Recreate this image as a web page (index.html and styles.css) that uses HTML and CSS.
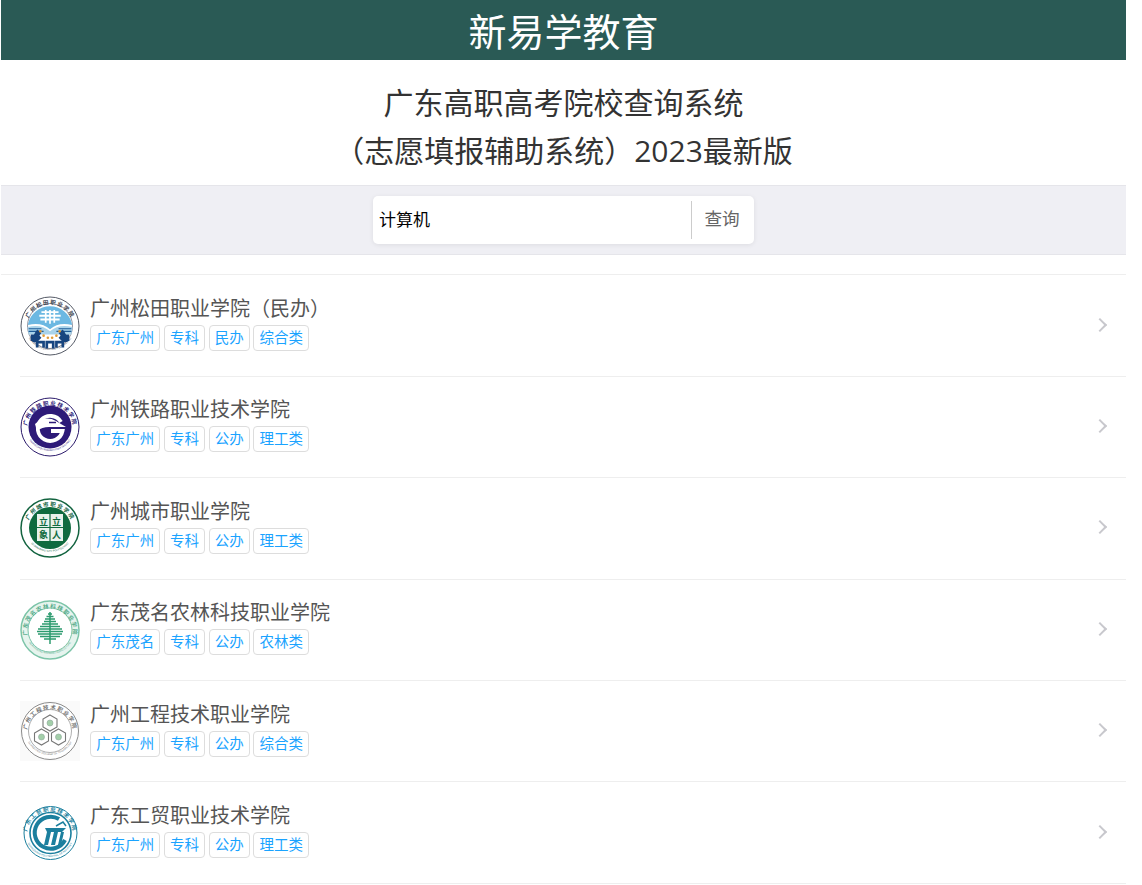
FILE: index.html
```html
<!DOCTYPE html>
<html lang="zh-CN">
<head>
<meta charset="utf-8">
<title>新易学教育</title>
<link rel="stylesheet" href="styles.css">
</head>
<body>
<div class="page">
  <header class="brand">新易学教育</header>
  <section class="heading">
    <div>广东高职高考院校查询系统</div>
    <div>（志愿填报辅助系统）2023最新版</div>
  </section>
  <section class="search-band">
    <form class="search">
      <input class="search-input" type="text" value="计算机">
      <span class="search-btn">查询</span>
    </form>
  </section>
  <svg class="defs" width="0" height="0">
    <defs>
      <path id="arcTop" d="M8 38 A23 23 0 1 1 52 38"/>
      <path id="arcBot" d="M6 36 A25 25 0 0 0 54 36"/>
    </defs>
  </svg>
  <main class="list">

    <a class="row">
      <svg class="logo" viewBox="0 0 60 60">
        <circle cx="30" cy="30" r="29" fill="#fff" stroke="#555a66" stroke-width="1"/>
        <circle cx="30" cy="30" r="22.500" fill="#fff" stroke="#667" stroke-width=".7"/>
        <text class="ring-cn cn-dark"><textPath href="#arcTop" startOffset="50%">广州松田职业学院</textPath></text>
        <text class="ring-en en-dark"><textPath href="#arcBot" startOffset="50%">GUANGZHOU SONGTIAN POLYTECHNIC</textPath></text>
        <g transform="translate(30 30) scale(1.07) translate(-30 -30)">
          <path d="M9.500 28 A21 21 0 0 1 50.500 28 L50.500 29 Q38 26 30 33 Q22 26 9.500 29 Z" fill="#6cb8e2"/>
          <path d="M22 17h16M20 20.500h20M21 24h18" stroke="#fff" stroke-width="1.800"/>
          <path d="M26 15v12M30 15v13M34 15v12" stroke="#fff" stroke-width="1.600"/>
          <path d="M9 31 Q22 28 30 35 Q38 28 51 31 L50 38 H10 Z" fill="#a9d3ea"/>
          <path d="M10 32.500h12M38 32.500h12M10 35h14M36 35h14" stroke="#1f5d99" stroke-width="1"/>
          <path d="M16 45 A16 16 0 0 1 20 35" fill="none" stroke="#17457f" stroke-width="5"/>
          <path d="M44 45 A16 16 0 0 0 40 35" fill="none" stroke="#17457f" stroke-width="5"/>
          <path d="M12 38h7l3 3-3 3h-7zM48 38h-7l-3 3 3 3h7z" fill="#17457f"/>
          <path d="M18 50v-5h6v5M27 51v-6h6v6M36 50v-5h6v5" fill="none" stroke="#17457f" stroke-width="2.500"/>
          <g fill="#e09a35"><circle cx="21" cy="35" r="1.200"/><circle cx="24" cy="39" r="1.200"/><circle cx="28" cy="41" r="1.200"/><circle cx="32" cy="41" r="1.200"/><circle cx="36" cy="39" r="1.200"/><circle cx="39" cy="35" r="1.200"/></g>
        </g>
      </svg>
      <div class="info">
        <div class="name">广州松田职业学院（民办）</div>
        <div class="tags"><span class="tag">广东广州</span><span class="tag">专科</span><span class="tag">民办</span><span class="tag">综合类</span></div>
      </div>
      <span class="chev"></span>
    </a>

    <a class="row">
      <svg class="logo" viewBox="0 0 60 60">
        <circle cx="30" cy="30" r="29" fill="#fff" stroke="#2b1a6b" stroke-width="1"/>
        <text class="ring-cn cn-navy"><textPath href="#arcTop" startOffset="50%">广州铁路职业技术学院</textPath></text>
        <text class="ring-en en-navy"><textPath href="#arcBot" startOffset="50%">GUANGZHOU RAILWAY POLYTECHNIC</textPath></text>
        <circle cx="30" cy="30" r="21.500" fill="#2d1a78"/>
        <path d="M41 25 A12.500 12.500 0 1 0 42.500 34 H31" fill="none" stroke="#fff" stroke-width="3.800"/>
        <path d="M15 27 Q25 18 36 24 L46 30 H29 Q22 30 17 34 Z" fill="#fff"/>
        <path d="M29 25.500h7" stroke="#2d1a78" stroke-width="1.500"/>
      </svg>
      <div class="info">
        <div class="name">广州铁路职业技术学院</div>
        <div class="tags"><span class="tag">广东广州</span><span class="tag">专科</span><span class="tag">公办</span><span class="tag">理工类</span></div>
      </div>
      <span class="chev"></span>
    </a>

    <a class="row">
      <svg class="logo" viewBox="0 0 60 60">
        <circle cx="30" cy="30" r="29" fill="#fff" stroke="#12633f" stroke-width="1.500"/>
        <text class="ring-cn cn-green"><textPath href="#arcTop" startOffset="50%">广州城市职业学院</textPath></text>
        <text class="ring-en en-green"><textPath href="#arcBot" startOffset="50%">GUANGZHOU CITY POLYTECHNIC</textPath></text>
        <circle cx="30" cy="30" r="21" fill="#0f6a3f"/>
        <rect x="17" y="16" width="26" height="27" fill="#e9f2ec"/>
        <path d="M30 16v27M17 29.500h26" stroke="#0f6a3f" stroke-width="1.200"/>
        <text class="seal" x="23.500" y="26.500">立</text>
        <text class="seal" x="36.500" y="26.500">立</text>
        <text class="seal" x="23.500" y="40">象</text>
        <text class="seal" x="36.500" y="40">人</text>
      </svg>
      <div class="info">
        <div class="name">广州城市职业学院</div>
        <div class="tags"><span class="tag">广东广州</span><span class="tag">专科</span><span class="tag">公办</span><span class="tag">理工类</span></div>
      </div>
      <span class="chev"></span>
    </a>

    <a class="row">
      <svg class="logo" viewBox="0 0 60 60">
        <circle cx="30" cy="30" r="29" fill="#e6f4ee" stroke="#7cc4a8" stroke-width="1.500"/>
        <circle cx="30" cy="30" r="22" fill="#fff" stroke="#7cc4a8" stroke-width="1"/>
        <text class="ring-cn cn-mint"><textPath href="#arcTop" startOffset="50%">广东茂名农林科技职业学院</textPath></text>
        <text class="ring-en en-mint"><textPath href="#arcBot" startOffset="50%">GUANGDONG MAOMING AGRICULTURE</textPath></text>
        <path d="M30 12V44" stroke="#2d9b6f" stroke-width="1.500"/>
        <path d="M28 14h4M26.500 16.500h7M25 19h10M24 21.500h12M22 24h16M20 26.500h20M18 29h24M17 31.500h26M18 34h24M20 36.500h20M24 39h12" stroke="#2d9b6f" stroke-width="1.700"/>
      </svg>
      <div class="info">
        <div class="name">广东茂名农林科技职业学院</div>
        <div class="tags"><span class="tag">广东茂名</span><span class="tag">专科</span><span class="tag">公办</span><span class="tag">农林类</span></div>
      </div>
      <span class="chev"></span>
    </a>

    <a class="row">
      <svg class="logo logo-soft" viewBox="0 0 60 60">
        <circle cx="30" cy="30" r="28.500" fill="#fff" stroke="#8a8a8a" stroke-width="1"/>
        <circle cx="30" cy="30" r="21.500" fill="#fff" stroke="#999" stroke-width=".8"/>
        <text class="ring-cn cn-gray"><textPath href="#arcTop" startOffset="50%">广州工程技术职业学院</textPath></text>
        <text class="ring-en en-gray"><textPath href="#arcBot" startOffset="50%">GUANGZHOU COLLEGE OF TECHNOLOGY</textPath></text>
        <g fill="#fff" stroke="#777" stroke-width="1.100">
          <path d="M30 14 L37 18 V26 L30 30 L23 26 V18 Z"/>
          <path d="M21.500 28 L28.500 32 V40 L21.500 44 L14.500 40 V32 Z"/>
          <path d="M38.500 28 L45.500 32 V40 L38.500 44 L31.500 40 V32 Z"/>
        </g>
        <g fill="#a3cfa9" stroke="#8fa89a" stroke-width=".6">
          <circle cx="30" cy="22" r="3"/><circle cx="21.500" cy="36" r="3"/><circle cx="38.500" cy="36" r="3"/>
        </g>
      </svg>
      <div class="info">
        <div class="name">广州工程技术职业学院</div>
        <div class="tags"><span class="tag">广东广州</span><span class="tag">专科</span><span class="tag">公办</span><span class="tag">综合类</span></div>
      </div>
      <span class="chev"></span>
    </a>

    <a class="row">
      <svg class="logo" viewBox="0 0 60 60">
        <circle cx="30.500" cy="30" r="26.500" fill="#fff" stroke="#1b7f9e" stroke-width="1"/>
        <circle cx="30.500" cy="30" r="20.500" fill="#fff" stroke="#1b7f9e" stroke-width="1.600"/>
        <text class="ring-cn cn-teal"><textPath href="#arcTop" startOffset="50%">广东工贸职业技术学院</textPath></text>
        <text class="ring-en en-teal"><textPath href="#arcBot" startOffset="50%">GUANGDONG POLYTECHNIC OF INDUSTRY</textPath></text>
        <path d="M39 16 A16 16 0 1 0 45 37" fill="none" stroke="#1b7f9e" stroke-width="4"/>
        <path d="M25 25 H46 L42 29 H38 L35 42 H31 L34 29 H31 L28 42 H24 L27 29 Z" fill="#1b7f9e"/>
        <path d="M38 42 L41 29 H44 L41 42 Z" fill="#1b7f9e"/>
        <path d="M36 23l7-4 3 4" fill="none" stroke="#1b7f9e" stroke-width="1.500"/>
      </svg>
      <div class="info">
        <div class="name">广东工贸职业技术学院</div>
        <div class="tags"><span class="tag">广东广州</span><span class="tag">专科</span><span class="tag">公办</span><span class="tag">理工类</span></div>
      </div>
      <span class="chev"></span>
    </a>

  </main>
</div>
</body>
</html>
```
FILE: styles.css
```css
* { box-sizing: border-box; }
html, body { margin: 0; padding: 0; background: #fff; overflow: hidden; }
body { font-family: "Noto Sans CJK SC", "Noto Sans", sans-serif; height: 885px; }
.page { width: 1125px; margin-left: 1px; }
.defs { position: absolute; }

.brand {
  height: 60px;
  background: #2a5a55;
  color: #fff;
  font-size: 38px;
  line-height: 60px;
  text-align: center;
}
.heading {
  height: 125px;
  padding-top: 19px;
  font-family: "Open Sans", "Noto Sans CJK SC", sans-serif;
  font-size: 30px;
  line-height: 48px;
  color: #333;
  text-align: center;
}
.search-band {
  height: 70px;
  background: #efeff4;
  border-top: 1px solid #e5e5ea;
  border-bottom: 1px solid #e5e5ea;
  display: flex;
  justify-content: center;
  padding-top: 10px;
}
.search {
  width: 381px;
  height: 48px;
  background: #fff;
  border-radius: 5px;
  box-shadow: 0 1px 5px rgba(0, 0, 0, .08);
  display: flex;
  align-items: center;
}
.search-input {
  flex: 1;
  min-width: 0;
  height: 44px;
  margin-bottom: 4px;
  border: 0;
  outline: 0;
  background: transparent;
  padding: 0 6px;
  font: 17px/24px "Noto Sans CJK SC", sans-serif;
  color: #000;
}
.search-btn {
  width: 63px;
  height: 38px;
  border-left: 1px solid #ccc;
  color: #666;
  font-size: 17.6px;
  line-height: 34px;
  padding-right: 2px;
  text-align: center;
}

.list { margin-top: 19px; padding-top: .4px; border-top: 1px solid #eee; }
.row {
  display: flex;
  align-items: center;
  height: 101.4px;
  margin-left: 19px;
  border-bottom: 1px solid #eee;
  padding-right: 19px;
}
.logo { width: 60px; height: 60px; flex: none; margin-right: 10px; }
.logo-soft { background: #fafafa; }
.info { flex: 1; min-width: 0; }
.name { font-size: 20px; line-height: 28px; color: #555; margin-top: -6px; }
.tags { display: flex; gap: 3.4px; margin-top: 3px; }
.tag {
  height: 26px;
  padding: 0 5.2px;
  border: 1px solid #ddd;
  border-radius: 4px;
  font-size: 14.5px;
  line-height: 22px;
  color: #1aa3ff;
}
.chev {
  width: 10px;
  height: 10px;
  flex: none;
  margin-right: 2px;
  margin-bottom: 2px;
  border-top: 2px solid #c8c8cd;
  border-right: 2px solid #c8c8cd;
  transform: rotate(45deg);
}

.ring-cn { font-size: 5.6px; font-weight: 700; text-anchor: middle; letter-spacing: 1.100px; }
.ring-en { font-size: 2.6px; text-anchor: middle; font-family: "Liberation Sans", sans-serif; }
.cn-dark, .en-dark { fill: #3b3f4d; }
.cn-navy, .en-navy { fill: #2d1a78; }
.cn-green, .en-green { fill: #12633f; }
.cn-mint, .en-mint { fill: #55ab8a; }
.cn-gray, .en-gray { fill: #777; }
.cn-teal, .en-teal { fill: #1b7f9e; }
.seal { font-size: 9px; font-weight: 700; text-anchor: middle; fill: #0f6a3f; }
```
